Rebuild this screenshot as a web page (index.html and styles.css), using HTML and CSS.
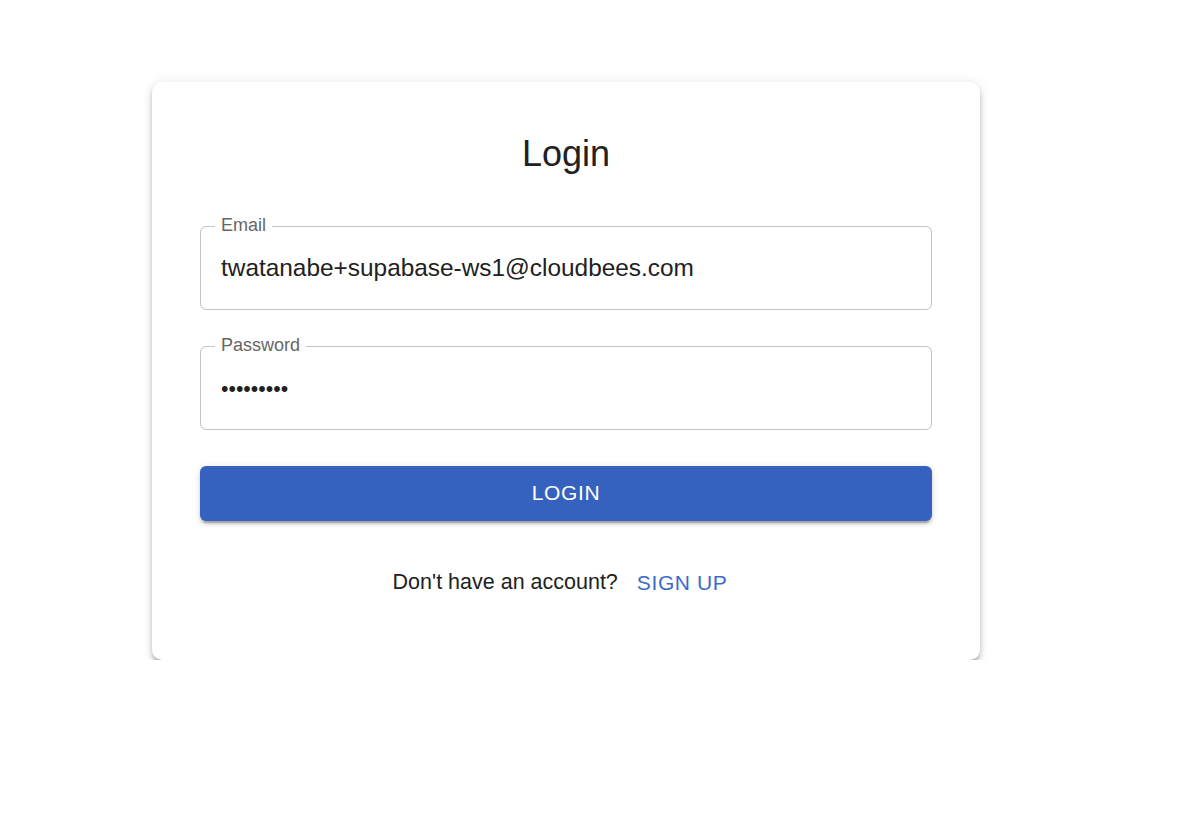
FILE: index.html
```html
<!DOCTYPE html>
<html lang="en">
<head>
<meta charset="utf-8">
<title>Login</title>
<link rel="stylesheet" href="styles.css">
</head>
<body>
<main class="page">
  <section class="card">
    <h1 class="title">Login</h1>
    <div class="field field-first">
      <label class="field-label" for="email">Email</label>
      <input class="field-input" id="email" type="email" value="twatanabe+supabase-ws1@cloudbees.com">
    </div>
    <div class="field">
      <label class="field-label" for="password">Password</label>
      <input class="field-input field-password" id="password" type="password" value="123456789">
    </div>
    <button class="login-btn" type="button">Login</button>
    <div class="signup-row">
      <span class="signup-text">Don't have an account?</span>
      <button class="signup-btn" type="button">Sign Up</button>
    </div>
  </section>
</main>
</body>
</html>
```

FILE: styles.css
```css
* { box-sizing: border-box; }

html, body {
  margin: 0;
  padding: 0;
  background: #ffffff;
}

body {
  font-family: "Liberation Sans", Arial, Helvetica, sans-serif;
  color: #212121;
}

.page {
  padding: 82px 0 0 152px;
}

.card {
  width: 828px;
  background: #fff;
  border-radius: 10px;
  padding: 48px 48px 50px;
  display: flex;
  flex-direction: column;
  box-shadow:
    0 4px 5px -2px rgba(0, 0, 0, 0.28),
    0 4.5px 6px 0 rgba(0, 0, 0, 0.12),
    0 1.5px 12px 0 rgba(0, 0, 0, 0.1);
}

.title {
  margin: 0 0 24px;
  font-size: 36px;
  line-height: 48px;
  font-weight: 400;
  text-align: center;
  color: #212121;
}

.field {
  position: relative;
  height: 84px;
  border: 1px solid #c4c4c4;
  border-radius: 6px;
  margin: 24px 0 12px;
  display: flex;
  align-items: center;
}

.field-label {
  position: absolute;
  left: 14px;
  top: -13px;
  padding: 0 6px;
  background: #fff;
  font-size: 18px;
  line-height: 22px;
  color: #666666;
}

.field-input {
  width: 100%;
  border: 0;
  outline: none;
  background: transparent;
  padding: 0 20px;
  font-family: "Liberation Sans", Arial, Helvetica, sans-serif;
  font-size: 24.4px;
  line-height: 34px;
  color: #212121;
}

.field-password {
  font-size: 21.3px;
  padding-top: 2px;
}

.login-btn {
  margin-top: 24px;
  height: 55px;
  border: 0;
  border-radius: 6px;
  background: #3562be;
  color: #fff;
  font-family: "Liberation Sans", Arial, Helvetica, sans-serif;
  font-size: 21px;
  font-weight: 500;
  letter-spacing: 0.6px;
  text-transform: uppercase;
  padding-bottom: 2px;
  box-shadow:
    0 4.5px 1.5px -3px rgba(0, 0, 0, 0.2),
    0 3px 3px 0 rgba(0, 0, 0, 0.14),
    0 1.5px 7.5px 0 rgba(0, 0, 0, 0.12);
}

.signup-row {
  margin-top: 34px;
  height: 55px;
  display: flex;
  align-items: center;
  justify-content: center;
  gap: 7px;
}

.signup-text {
  font-size: 21.5px;
  color: #212121;
}

.signup-btn {
  border: 0;
  background: transparent;
  padding: 0 12px;
  height: 55px;
  color: #3a6cc9;
  font-family: "Liberation Sans", Arial, Helvetica, sans-serif;
  font-size: 21px;
  letter-spacing: 0.6px;
  text-transform: uppercase;
}
```
